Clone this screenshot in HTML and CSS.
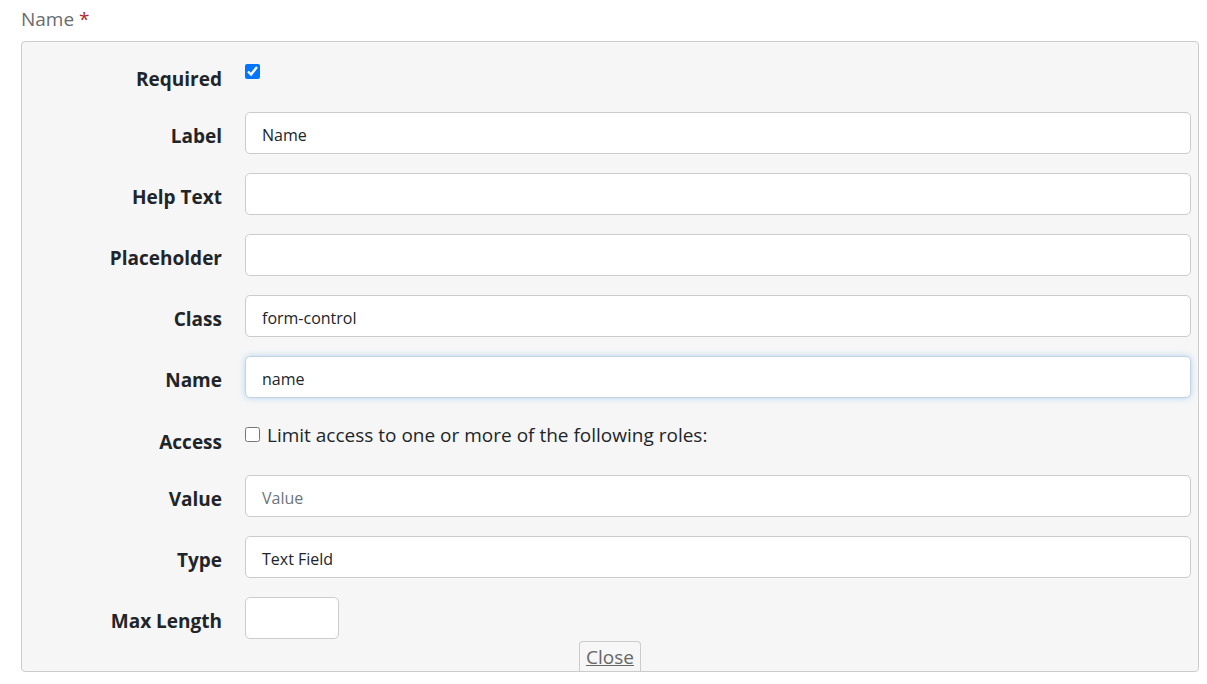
FILE: index.html
```html
<!DOCTYPE html>
<html>
<head>
<meta charset="utf-8">
<link rel="stylesheet" href="styles.css">
</head>
<body>
<div class="field-title">Name <span class="req">*</span></div>
<div class="panel">
  <div class="row row-required">
    <label class="lbl lbl-required">Required</label>
    <div class="ctl"><input type="checkbox" class="chk chk-top" checked></div>
  </div>
  <div class="row">
    <label class="lbl">Label</label>
    <div class="ctl"><div class="input">Name</div></div>
  </div>
  <div class="row">
    <label class="lbl">Help Text</label>
    <div class="ctl"><div class="input"></div></div>
  </div>
  <div class="row">
    <label class="lbl">Placeholder</label>
    <div class="ctl"><div class="input"></div></div>
  </div>
  <div class="row">
    <label class="lbl">Class</label>
    <div class="ctl"><div class="input">form-control</div></div>
  </div>
  <div class="row">
    <label class="lbl">Name</label>
    <div class="ctl"><div class="input focus">name</div></div>
  </div>
  <div class="row row-access">
    <label class="lbl lbl-access">Access</label>
    <div class="ctl ctl-access"><input type="checkbox" class="chk"><span class="access-text">Limit access to one or more of the following roles:</span></div>
  </div>
  <div class="row">
    <label class="lbl">Value</label>
    <div class="ctl"><div class="input placeholder">Value</div></div>
  </div>
  <div class="row">
    <label class="lbl">Type</label>
    <div class="ctl"><div class="input">Text Field</div></div>
  </div>
  <div class="row">
    <label class="lbl">Max Length</label>
    <div class="ctl"><div class="input short"></div></div>
  </div>
  <div class="close-wrap"><a class="close" href="#">Close</a></div>
</div>
</body>
</html>
```
FILE: styles.css
```css
html, body {
  margin: 0;
  padding: 0;
  background: #ffffff;
}
body {
  font-family: "Open Sans", "Noto Sans", sans-serif;
  font-size: 19px;
  color: #212529;
}
.field-title {
  padding: 6px 0 0 21px;
  height: 41px;
  box-sizing: border-box;
  line-height: 26px;
  color: #6b6b6b;
}
.req {
  color: #b0272a;
}
.panel {
  margin: 0 8px 0 21px;
  height: 631px;
  box-sizing: border-box;
  border: 1px solid #cccccc;
  border-radius: 4px;
  background: #f6f6f6;
  padding: 14px 7px 0 0;
  display: flex;
  flex-direction: column;
}
.row {
  display: grid;
  grid-template-columns: 200px 1fr;
  column-gap: 23px;
  height: 42px;
  margin-bottom: 19px;
}
.row-required {
  height: 37px;
}
.row-access {
  height: 39px;
}
.lbl {
  font-weight: bold;
  text-align: right;
  line-height: 26px;
  padding-top: 11px;
}
.lbl-required {
  padding-top: 10px;
}
.lbl-access {
  padding-top: 12px;
}
.ctl {
  display: flex;
  align-items: flex-start;
}
.input {
  flex: 1;
  height: 42px;
  box-sizing: border-box;
  border: 1px solid #cccccc;
  border-radius: 5px;
  background: #ffffff;
  padding: 2px 16px 0;
  line-height: 40px;
  font-size: 16px;
  color: #212529;
}
.input.focus {
  border-color: #c2d2e2;
  box-shadow: 0 0 6px rgba(102, 175, 233, 0.45);
}
.input.placeholder {
  color: #6c757d;
}
.input.short {
  flex: 0 0 94px;
}
.chk {
  width: 15px;
  height: 15px;
  margin: 0;
  accent-color: #0075ff;
}
.chk-top {
  margin-top: 8px;
}
.ctl-access {
  align-items: center;
  height: 39px;
  padding-bottom: 4px;
  box-sizing: border-box;
}
.ctl-access .chk {
  margin-right: 7px;
}
.access-text {
  font-size: 19px;
}
.close-wrap {
  margin-top: -17px;
  display: flex;
  justify-content: center;
  margin-left: 7px;
}
.close {
  display: block;
  border: 1px solid #cccccc;
  border-bottom: none;
  border-radius: 4px 4px 0 0;
  background: #f6f6f6;
  padding: 0 6px;
  height: 30px;
  box-sizing: border-box;
  line-height: 31px;
  color: #666666;
  text-decoration: underline;
  font-size: 19px;
}
```
